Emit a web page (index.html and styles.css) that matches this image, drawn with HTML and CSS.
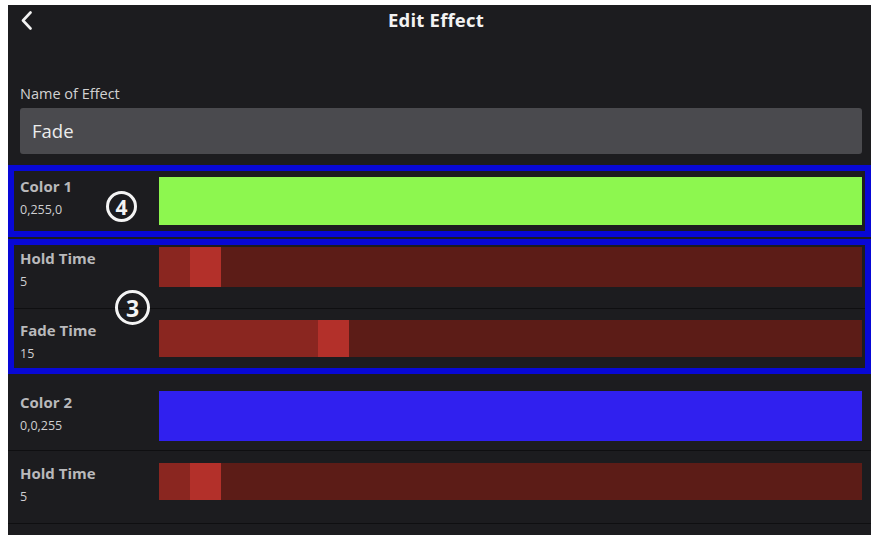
FILE: index.html
```html
<!DOCTYPE html>
<html lang="en">
<head>
<meta charset="utf-8">
<title>Edit Effect</title>
<link rel="stylesheet" href="styles.css">
</head>
<body>
<div class="screen">
  <header class="topbar">
    <button class="back" aria-label="Back">
      <svg width="12" height="19" viewBox="0 0 12 19"><polyline points="9.5,1.5 2,9.5 9.5,17.5" fill="none" stroke="#f2f2f2" stroke-width="2.6" stroke-linecap="round" stroke-linejoin="round"/></svg>
    </button>
    <h1 class="title">Edit Effect</h1>
  </header>

  <section class="name-field">
    <label class="field-label">Name of Effect</label>
    <div class="input">Fade</div>
  </section>

  <div class="box box-first">
    <div class="row row-c1">
      <div class="label"><div class="l-title">Color 1</div><div class="l-value">0,255,0</div></div>
      <div class="swatch swatch-green"></div>
    </div>
  </div>

  <div class="box box-second">
    <div class="row row-h1">
      <div class="label"><div class="l-title">Hold Time</div><div class="l-value">5</div></div>
      <div class="slider slider-h40"><div class="fill" style="width:31px"></div><div class="thumb"></div></div>
    </div>
    <div class="row row-f1 sep">
      <div class="label"><div class="l-title">Fade Time</div><div class="l-value">15</div></div>
      <div class="slider slider-h37"><div class="fill" style="width:159px"></div><div class="thumb"></div></div>
    </div>
  </div>

  <div class="row row-c2">
    <div class="label"><div class="l-title">Color 2</div><div class="l-value">0,0,255</div></div>
    <div class="swatch swatch-blue"></div>
  </div>
  <div class="row row-h2 sep last">
    <div class="label"><div class="l-title">Hold Time</div><div class="l-value">5</div></div>
    <div class="slider slider-h37"><div class="fill" style="width:31px"></div><div class="thumb"></div></div>
  </div>

  <div class="badge badge-4">4</div>
  <div class="badge badge-3">3</div>
</div>
</body>
</html>
```
FILE: styles.css
```css
html, body {
  margin: 0;
  padding: 0;
  background: #ffffff;
  height: 100%;
  overflow: hidden;
}
body {
  padding: 5px 0 0 8px;
  box-sizing: border-box;
  font-family: "Open Sans", "Noto Sans", "DejaVu Sans", sans-serif;
}
.screen {
  position: relative;
  background: #1c1c1f;
  height: 540px;
  overflow: hidden;
  color: #e6e6e6;
}
.topbar {
  height: 30px;
  display: flex;
  align-items: center;
  justify-content: center;
  padding-right: 7px;
  position: relative;
}
.back {
  position: absolute;
  left: 13px;
  top: 6px;
  padding: 0;
  border: 0;
  background: none;
  display: block;
  line-height: 0;
}
.title {
  margin: 0;
  font-size: 18.5px;
  font-weight: 700;
  color: #f2f2f2;
  line-height: 30px;
  letter-spacing: 0.2px;
}
.name-field {
  padding: 50px 9px 0 12px;
  display: flex;
  flex-direction: column;
  gap: 5px;
}
.field-label {
  font-size: 14.5px;
  line-height: 18px;
  color: #d2d2d2;
}
.input {
  height: 46px;
  background: #4a4a4e;
  border-radius: 3px;
  padding-left: 12px;
  font-size: 18.5px;
  line-height: 46px;
  color: #ececec;
}
.box {
  border: 6px solid #0808d6;
}
.box-first {
  margin-top: 11px;
}
.box-second {
  margin-top: 2px;
}
.row {
  display: flex;
  align-items: flex-start;
  box-sizing: border-box;
  overflow: hidden;
  padding: 0 9px 0 12px;
}
.box .row {
  padding-left: 6px;
  padding-right: 3px;
}
.sep {
  border-top: 1px solid #0f0f11;
}
.last {
  border-bottom: 1px solid #0f0f11;
}
.label {
  width: 139px;
  flex: none;
}
.l-title {
  font-size: 15px;
  font-weight: 700;
  line-height: 18px;
  color: #b9b9bb;
}
.l-value {
  margin-top: 6px;
  font-size: 12.5px;
  line-height: 18px;
  color: #cfcfd1;
}
.swatch, .slider {
  flex: 1;
}
.swatch-green {
  height: 48px;
  background: #8df74f;
}
.swatch-blue {
  height: 50px;
  background: #3020ef;
}
.slider {
  display: flex;
  background: #5c1c17;
}
.slider-h40 { height: 40px; }
.slider-h37 { height: 37px; }
.fill {
  background: #8a2620;
}
.thumb {
  width: 31px;
  background: #b3302a;
}
.row-c1 {
  height: 60px;
  padding-top: 6px;
}
.row-h1 {
  height: 63px;
  padding-top: 2px;
}
.row-h1 .label { margin-top: 2px; }
.row-f1 {
  height: 60px;
  padding-top: 11px;
}
.row-f1 .label { margin-top: 1px; }
.row-c2 {
  height: 76px;
  padding-top: 17px;
}
.row-c2 .label { margin-top: 2px; }
.row-h2 {
  height: 74px;
  padding-top: 12px;
}
.row-h2 .label { margin-top: 1px; }
.badge {
  position: absolute;
  box-sizing: border-box;
  border: 3px solid #f4f4f4;
  border-radius: 50%;
  color: #f4f4f4;
  font-weight: 700;
  display: flex;
  align-items: center;
  justify-content: center;
  background: transparent;
}
.badge-4 {
  left: 98px;
  top: 186px;
  width: 31px;
  height: 31px;
  font-size: 21px;
}
.badge-3 {
  left: 107px;
  top: 285px;
  width: 35px;
  height: 35px;
  font-size: 23px;
}
```
